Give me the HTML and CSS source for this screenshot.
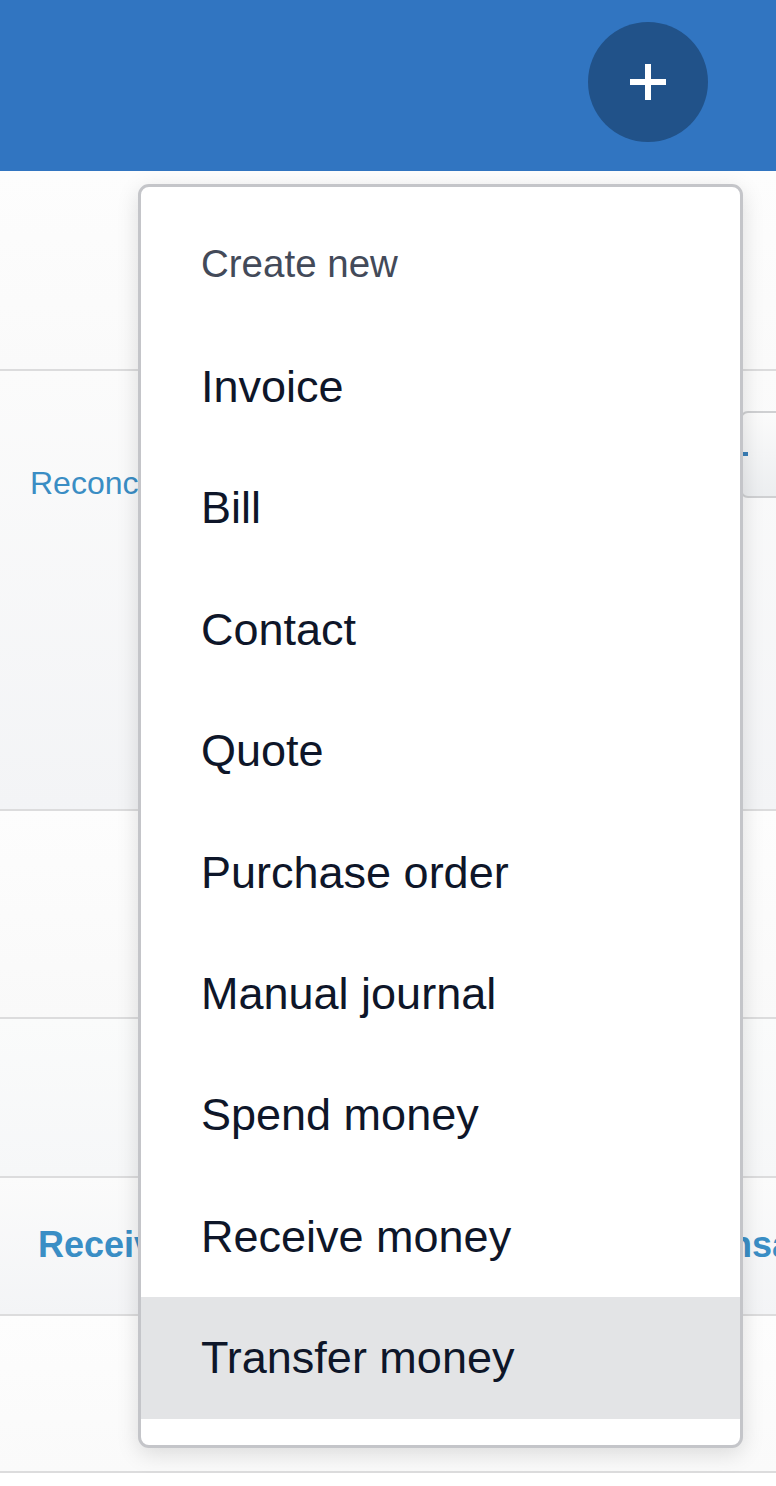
FILE: index.html
```html
<!DOCTYPE html>
<html lang="en">
<head>
<meta charset="utf-8">
<title>Create new</title>
<link rel="stylesheet" href="styles.css">
</head>
<body>
<header class="topbar">
  <button class="add-btn" aria-label="Create new">
    <svg width="36" height="36" viewBox="0 0 36 36" aria-hidden="true">
      <rect x="15" y="0" width="6" height="36" fill="#fff"/>
      <rect x="0" y="15" width="36" height="6" fill="#fff"/>
    </svg>
  </button>
</header>
<main class="content">
  <section class="row row-1"></section>
  <section class="row row-2">
    <a class="link-reconcile">Reconcile 12 items</a>
    <span class="side-btn"><span class="side-btn-mark"></span></span>
  </section>
  <section class="row row-3"></section>
  <section class="row row-4"></section>
  <section class="row row-5">
    <a class="link-bold link-left">Receive money</a>
    <a class="link-bold link-right">Transactions</a>
  </section>
  <section class="row row-6"></section>

  <nav class="menu">
    <div class="menu-title">Create new</div>
    <ul class="menu-list">
      <li class="menu-item">Invoice</li>
      <li class="menu-item">Bill</li>
      <li class="menu-item">Contact</li>
      <li class="menu-item">Quote</li>
      <li class="menu-item">Purchase order</li>
      <li class="menu-item">Manual journal</li>
      <li class="menu-item">Spend money</li>
      <li class="menu-item">Receive money</li>
      <li class="menu-item menu-item-active">Transfer money</li>
    </ul>
  </nav>
</main>
</body>
</html>
```

FILE: styles.css
```css
* { box-sizing: border-box; }

html, body {
  margin: 0;
  padding: 0;
  background: #ffffff;
  font-family: "Liberation Sans", Arial, Helvetica, sans-serif;
}

.topbar {
  height: 171px;
  background: #3175c1;
  display: flex;
  justify-content: flex-end;
  align-items: flex-start;
  padding: 22px 68px 0 0;
}

.add-btn {
  width: 120px;
  height: 120px;
  border-radius: 50%;
  border: none;
  background: #215289;
  display: flex;
  align-items: center;
  justify-content: center;
  padding: 0;
}

.content {
  position: relative;
  display: flex;
  flex-direction: column;
}

.row {
  border-bottom: 2px solid #dcdcdd;
  position: relative;
  overflow: hidden;
}

.row-1 { height: 200px; background: linear-gradient(#fdfdfd, #fafafa); }
.row-2 {
  height: 440px;
  background: linear-gradient(#fbfbfb, #f3f4f6);
  display: flex;
  align-items: flex-start;
}
.row-3 { height: 208px; background: linear-gradient(#fdfdfd, #f9f9f9); }
.row-4 { height: 159px; background: linear-gradient(#fafbfb, #f6f7f8); }
.row-5 {
  height: 138px;
  background: linear-gradient(#fbfbfb, #f3f4f6);
  display: flex;
  align-items: flex-start;
}
.row-6 { height: 157px; background: linear-gradient(#fdfdfd, #fafafa); }

.link-reconcile {
  margin: 94px 0 0 30px;
  font-size: 32px;
  line-height: 36px;
  color: #3a8dc4;
  white-space: nowrap;
}

.side-btn {
  margin: 40px -84px 0 auto;
  width: 120px;
  height: 87px;
  border: 2px solid #cfd0d2;
  border-radius: 8px;
  background: linear-gradient(#fbfbfb, #eceef0);
  display: flex;
  align-items: center;
  justify-content: flex-start;
  padding-left: 0;
}

.side-btn-mark {
  width: 6px;
  height: 4px;
  background: #3a7fb8;
  margin-top: -2px;
}

.link-bold {
  font-size: 36px;
  line-height: 40px;
  font-weight: bold;
  color: #3a8ec5;
  white-space: nowrap;
}

.link-left { margin: 47px 0 0 38px; }
.link-right { margin: 47px 0 0 auto; position: relative; left: 122px; }

.menu {
  position: absolute;
  left: 138px;
  top: 13px;
  width: 605px;
  height: 1264px;
  background: #ffffff;
  border: 3px solid #c4c5c9;
  border-radius: 11px;
  box-shadow: 0 6px 22px rgba(0, 0, 0, 0.13);
  overflow: hidden;
}

.menu-title {
  height: 139px;
  padding: 55px 0 0 60px;
  font-size: 38.5px;
  line-height: 44px;
  color: #434a59;
}

.menu-list {
  list-style: none;
  margin: 0;
  padding: 0;
}

.menu-item {
  height: 121.4px;
  line-height: 121.4px;
  padding-left: 60px;
  font-size: 45px;
  color: #0e1629;
  white-space: nowrap;
}

.menu-item-active {
  background: #e3e4e6;
}
```
